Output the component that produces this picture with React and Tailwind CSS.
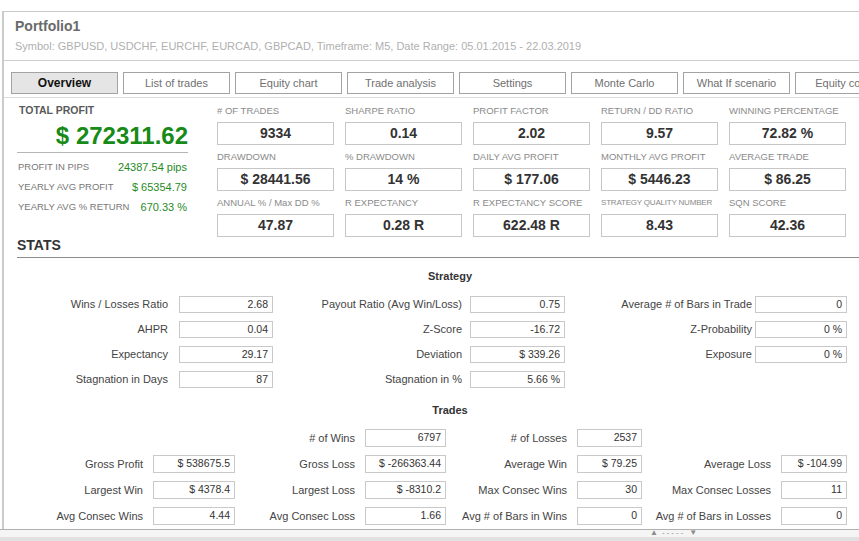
import React from 'react';

// Backtest portfolio overview: header, tabs, summary metrics and stats tables

const tabs = ['Overview', 'List of trades', 'Equity chart', 'Trade analysis', 'Settings', 'Monte Carlo', 'What If scenario', 'Equity control'];

const metrics = [
  { label: '# OF TRADES', value: '9334' },
  { label: 'SHARPE RATIO', value: '0.14' },
  { label: 'PROFIT FACTOR', value: '2.02' },
  { label: 'RETURN / DD RATIO', value: '9.57' },
  { label: 'WINNING PERCENTAGE', value: '72.82 %' },
  { label: 'DRAWDOWN', value: '$ 28441.56' },
  { label: '% DRAWDOWN', value: '14 %' },
  { label: 'DAILY AVG PROFIT', value: '$ 177.06' },
  { label: 'MONTHLY AVG PROFIT', value: '$ 5446.23' },
  { label: 'AVERAGE TRADE', value: '$ 86.25' },
  { label: 'ANNUAL % / Max DD %', value: '47.87' },
  { label: 'R EXPECTANCY', value: '0.28 R' },
  { label: 'R EXPECTANCY SCORE', value: '622.48 R' },
  { label: 'STRATEGY QUALITY NUMBER', value: '8.43', small: true },
  { label: 'SQN SCORE', value: '42.36' },
];

const profitRows = [
  ['PROFIT IN PIPS', '24387.54 pips'],
  ['YEARLY AVG PROFIT', '$ 65354.79'],
  ['YEARLY AVG % RETURN', '670.33 %'],
];

// per column: [label cell width + padding, box width]
const strategyCols = [
  ['w-[175px] pr-[11px]', 'w-[94px]'],
  ['w-[197px] pr-[8px]', 'w-[95px]'],
  ['w-[190px] pr-[3px]', 'w-[92px]'],
];

const strategyRows = [
  [['Wins / Losses Ratio', '2.68'], ['Payout Ratio (Avg Win/Loss)', '0.75'], ['Average # of Bars in Trade', '0']],
  [['AHPR', '0.04'], ['Z-Score', '-16.72'], ['Z-Probability', '0 %']],
  [['Expectancy', '29.17'], ['Deviation', '$ 339.26'], ['Exposure', '0 %']],
  [['Stagnation in Days', '87'], ['Stagnation in %', '5.66 %'], null],
];

const tradeCols = [
  ['w-[149px] pr-[10px]', 'w-[82px]'],
  ['w-[130px] pr-[10px]', 'w-[81px]'],
  ['w-[131px] pr-[10px]', 'w-[65px]'],
  ['w-[139px] pr-[10px]', 'w-[66px]'],
];

const tradeRows = [
  [null, ['# of Wins', '6797'], ['# of Losses', '2537'], null],
  [['Gross Profit', '$ 538675.5'], ['Gross Loss', '$ -266363.44'], ['Average Win', '$ 79.25'], ['Average Loss', '$ -104.99']],
  [['Largest Win', '$ 4378.4'], ['Largest Loss', '$ -8310.2'], ['Max Consec Wins', '30'], ['Max Consec Losses', '11']],
  [['Avg Consec Wins', '4.44'], ['Avg Consec Loss', '1.66'], ['Avg # of Bars in Wins', '0'], ['Avg # of Bars in Losses', '0']],
];

const StatField = ({ item, labelClass, boxClass, height }) => (
  <>
    <div className={`${labelClass} shrink-0 text-right text-[11px] text-[#444] whitespace-nowrap`}>
      {item ? item[0] : ''}
    </div>
    <div
      className={`${boxClass} ${height} shrink-0 flex items-center justify-end pr-[4px] text-[10.5px] text-[#333] ${
        item ? 'border border-[#c9c9c9] bg-white' : ''
      }`}
    >
      {item ? item[1] : ''}
    </div>
  </>
);

const SectionTitle = ({ children, className }) => (
  <div className={`ml-[346px] w-[200px] text-center text-[11px] font-bold text-[#333] leading-[14px] ${className}`}>
    {children}
  </div>
);

export default function App() {
  return (
    <div className="w-[859px] h-[541px] overflow-hidden bg-white flex flex-col font-['Liberation_Sans',Arial,sans-serif]">
      <div className="h-[11px] shrink-0" />

      <div className="flex-1 min-h-0 ml-[2px] border-l-2 border-t border-[#cbcbcb] flex flex-col">
        {/* Header */}
        <div className="h-[49px] shrink-0 border-b border-[#cfcfcf] pl-[11px] pt-[6px]">
          <div className="text-[14px] leading-[16px] font-bold text-[#6a6a6a]">Portfolio1</div>
          <div className="mt-[5px] text-[11px] leading-[14px] text-[#b0b0b0] whitespace-nowrap">
            Symbol: GBPUSD, USDCHF, EURCHF, EURCAD, GBPCAD, Timeframe: M5, Date Range: 05.01.2015 - 22.03.2019
          </div>
        </div>

        {/* Tabs */}
        <div className="shrink-0 pt-[11px] pb-[3px] pl-[7px] border-b border-[#dcdcdc] flex gap-[5px]">
          {tabs.map((tab, i) => (
            <div
              key={tab}
              className={`w-[107px] h-[22px] shrink-0 flex items-center justify-center border border-[#a3a3a3] whitespace-nowrap ${
                i === 0 ? 'bg-[#e5e5e5] text-[12px] font-bold text-[#111]' : 'bg-white text-[11px] text-[#707070]'
              }`}
            >
              {tab}
            </div>
          ))}
        </div>

        {/* Summary */}
        <div className="flex pl-[13px] pt-[6px]">
          <div className="w-[171px] shrink-0">
            <div className="h-[13px] leading-[13px] pl-[2px] text-[10.5px] font-bold text-[#5a5a5a]">TOTAL PROFIT</div>
            <div className="mt-[5px] h-[28px] leading-[28px] text-right text-[24px] font-bold text-[#178a17]">
              $ 272311.62
            </div>
            <div className="mt-[2px] border-b border-[#b5b5b5]" />
            <div className="mt-[4px]">
              {profitRows.map(([label, value]) => (
                <div key={label} className="h-[20px] flex items-center justify-between pl-[1px] pr-[1px]">
                  <span className="text-[9.5px] text-[#777]">{label}</span>
                  <span className="text-[11px] text-[#1f8a1f]">{value}</span>
                </div>
              ))}
            </div>
          </div>

          <div className="ml-[29px] grid grid-cols-[repeat(5,117px)] gap-x-[11px] gap-y-[5px]">
            {metrics.map((m) => (
              <div key={m.label}>
                <div
                  className={`h-[13px] leading-[13px] text-[#8a8a8a] whitespace-nowrap ${
                    m.small ? 'text-[8px] tracking-[-0.2px]' : 'text-[9.5px]'
                  }`}
                >
                  {m.label}
                </div>
                <div className="mt-[5px] h-[23px] border border-[#c6c6c6] flex items-center justify-center text-[14px] font-bold text-[#333]">
                  {m.value}
                </div>
              </div>
            ))}
          </div>
        </div>

        {/* Stats */}
        <div className="ml-[13px] pb-[4px] border-b border-[#8c8c8c] text-[14px] leading-[16px] font-bold text-[#333]">
          STATS
        </div>

        <SectionTitle className="mt-[11px]">Strategy</SectionTitle>
        <div className="mt-[13px] flex flex-col gap-[8px]">
          {strategyRows.map((row, r) => (
            <div key={r} className="flex items-center">
              {row.map((item, c) => (
                <StatField
                  key={c}
                  item={item}
                  labelClass={strategyCols[c][0]}
                  boxClass={strategyCols[c][1]}
                  height="h-[17px]"
                />
              ))}
            </div>
          ))}
        </div>

        <SectionTitle className="mt-[15px]">Trades</SectionTitle>
        <div className="mt-[12px] flex flex-col gap-[8px]">
          {tradeRows.map((row, r) => (
            <div key={r} className="flex items-center">
              {row.map((item, c) => (
                <StatField
                  key={c}
                  item={item}
                  labelClass={tradeCols[c][0]}
                  boxClass={tradeCols[c][1]}
                  height="h-[18px]"
                />
              ))}
            </div>
          ))}
        </div>
      </div>

      {/* Splitter */}
      <div className="h-[12px] shrink-0 border-t border-[#b0b0b0] flex flex-col">
        <div className="h-[7px] bg-[#f5f5f5] relative">
          <div className="absolute left-[650px] top-[-1px] flex items-center gap-[4px] text-[8px] leading-[8px] text-[#8a8a8a]">
            <span>▲</span>
            <span className="tracking-[2px]">-----</span>
            <span>▼</span>
          </div>
        </div>
        <div className="flex-1 bg-[#e1e1e1]" />
      </div>
    </div>
  );
}
